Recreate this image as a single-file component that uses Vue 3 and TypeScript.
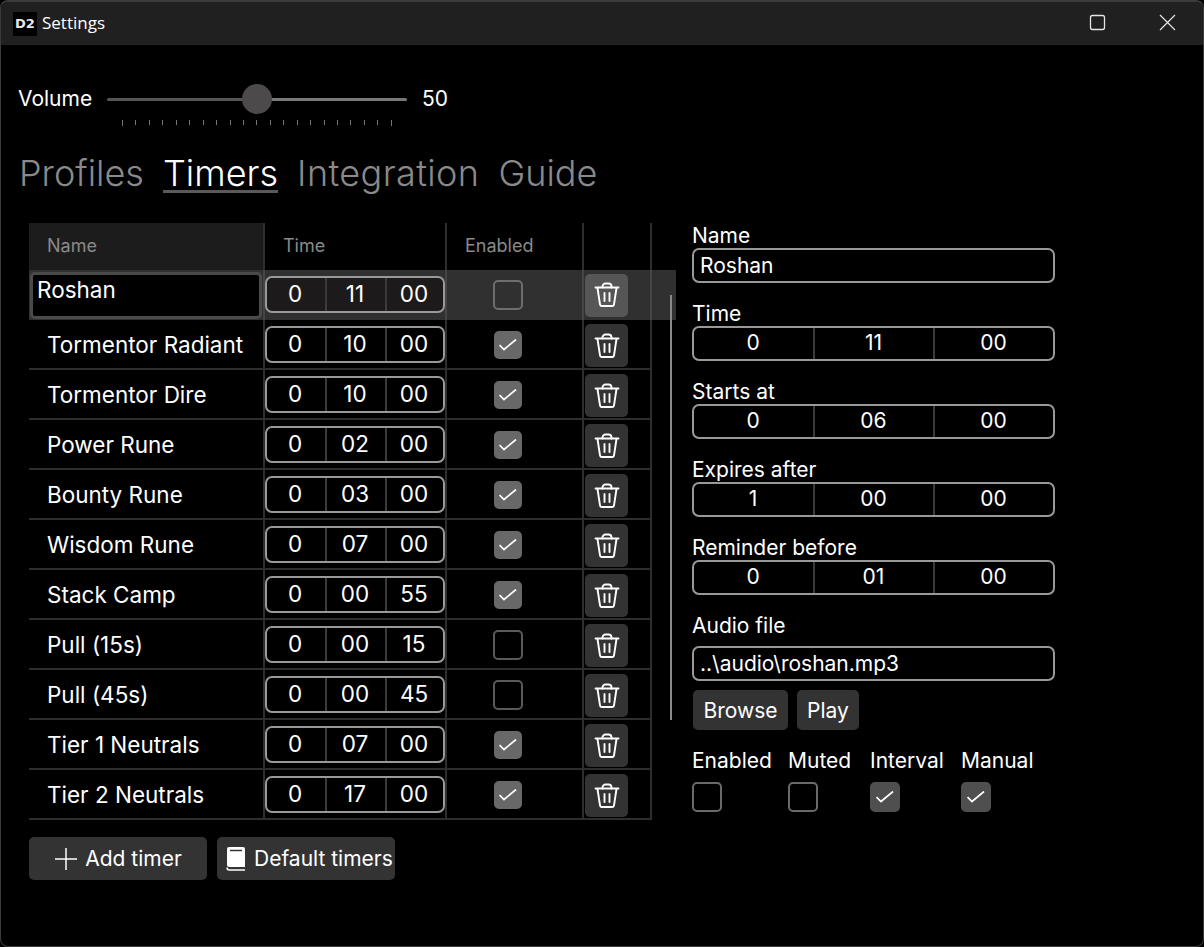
<script setup lang="ts">
interface TimerRow {
  name: string
  h: string
  m: string
  s: string
  on: boolean
}

const rows: TimerRow[] = [
  { name: 'Roshan', h: '0', m: '11', s: '00', on: false },
  { name: 'Tormentor Radiant', h: '0', m: '10', s: '00', on: true },
  { name: 'Tormentor Dire', h: '0', m: '10', s: '00', on: true },
  { name: 'Power Rune', h: '0', m: '02', s: '00', on: true },
  { name: 'Bounty Rune', h: '0', m: '03', s: '00', on: true },
  { name: 'Wisdom Rune', h: '0', m: '07', s: '00', on: true },
  { name: 'Stack Camp', h: '0', m: '00', s: '55', on: true },
  { name: 'Pull (15s)', h: '0', m: '00', s: '15', on: false },
  { name: 'Pull (45s)', h: '0', m: '00', s: '45', on: false },
  { name: 'Tier 1 Neutrals', h: '0', m: '07', s: '00', on: true },
  { name: 'Tier 2 Neutrals', h: '0', m: '17', s: '00', on: true },
]

const tabs = ['Profiles', 'Timers', 'Integration', 'Guide']
const ticks = Array.from({ length: 21 }, (_, i) => i)

const timeFields = [
  { label: 'Time', parts: ['0', '11', '00'] },
  { label: 'Starts at', parts: ['0', '06', '00'] },
  { label: 'Expires after', parts: ['1', '00', '00'] },
  { label: 'Reminder before', parts: ['0', '01', '00'] },
]

const flags = [
  { label: 'Enabled', on: false, width: 96 },
  { label: 'Muted', on: false, width: 82 },
  { label: 'Interval', on: true, width: 91 },
  { label: 'Manual', on: true, width: 72 },
]
</script>

<template>
  <div class="window">
    <header class="titlebar">
      <div class="logo">D2</div>
      <span class="title">Settings</span>
      <div class="controls">
        <svg width="70" height="45" viewBox="0 0 70 45">
          <rect x="27.500" y="15.500" width="14" height="14" rx="2" fill="none" stroke="#e4e4e4" stroke-width="1.300" />
        </svg>
        <svg width="70" height="45" viewBox="0 0 70 45">
          <path d="M27 15l15 15M42 15l-15 15" stroke="#e4e4e4" stroke-width="1.200" />
        </svg>
      </div>
    </header>

    <main class="content">
      <div class="volume">
        <span class="volume-label">Volume</span>
        <div class="slider">
          <div class="track">
            <div class="track-left" />
            <div class="track-right" />
            <div class="thumb" />
          </div>
          <div class="ticks">
            <i v-for="t in ticks" :key="t" :class="{ long: t === 0 || t === 20 }" />
          </div>
        </div>
        <span class="volume-value">50</span>
      </div>

      <nav class="tabs">
        <span v-for="t in tabs" :key="t" class="tab" :class="{ active: t === 'Timers' }">{{ t }}</span>
      </nav>

      <div class="columns">
        <section class="left">
          <div class="table">
            <div class="row head">
              <div class="cell name">Name</div>
              <div class="cell time-head">Time</div>
              <div class="cell enabled-head">Enabled</div>
              <div class="cell" />
            </div>

            <div v-for="(r, i) in rows" :key="r.name" class="row" :class="{ hover: i === 0 }">
              <div class="cell name">
                <div v-if="i === 0" class="name-edit">{{ r.name }}</div>
                <template v-else>{{ r.name }}</template>
              </div>
              <div class="cell time-cell">
                <div class="time-input">
                  <span>{{ r.h }}</span>
                  <span>{{ r.m }}</span>
                  <span>{{ r.s }}</span>
                </div>
              </div>
              <div class="cell check-cell">
                <span class="check" :class="{ on: r.on, light: true }">
                  <svg v-if="r.on" width="18" height="12" viewBox="0 0 18 12">
                    <path d="M.500 6L5 10.500 17 .500" fill="none" stroke="#fff" stroke-width="1.700" />
                  </svg>
                </span>
              </div>
              <div class="cell trash-cell">
                <button class="icon-btn">
                  <svg width="26" height="26" viewBox="0 0 26 26" fill="none" stroke="#fff" stroke-width="1.900" stroke-linecap="round" stroke-linejoin="round">
                    <path d="M1.500 5.500h23" />
                    <path d="M8.500 5.500V4.500a3 3 0 0 1 3-3h3a3 3 0 0 1 3 3v1" />
                    <path d="M3.500 6l2.500 16.300a2 2 0 0 0 2 1.700h10a2 2 0 0 0 2-1.700L22.500 6" />
                    <path d="M10.500 11v8M15.500 11v8" />
                  </svg>
                </button>
              </div>
            </div>
            <div class="hover-tail" />
            <div class="scrollbar" />
          </div>

          <div class="actions">
            <button class="btn wide">
              <svg width="24" height="24" viewBox="0 0 24 24"><path d="M12 1v22M1 12h22" stroke="#fff" stroke-width="1.500" /></svg>
              Add timer
            </button>
            <button class="btn wide default">
              <svg width="20" height="26" viewBox="0 0 20 26">
                <path d="M3 1h14a2 2 0 0 1 2 2v18H3a2 2 0 0 1-2-2V3a2 2 0 0 1 2-2z" fill="#fff" />
                <path d="M4 4.500h12" stroke="#333" stroke-width="1.500" />
                <path d="M1 21.500c0 1.500 1 2.500 2.500 2.500H19" fill="none" stroke="#fff" stroke-width="1.500" />
              </svg>
              Default timers
            </button>
          </div>
        </section>

        <aside class="side">
          <label class="side-label">Name</label>
          <div class="text-input">Roshan</div>

          <template v-for="f in timeFields" :key="f.label">
            <label class="side-label gap">{{ f.label }}</label>
            <div class="time-input wide-time">
              <span v-for="(p, i) in f.parts" :key="i">{{ p }}</span>
            </div>
          </template>

          <label class="side-label gap">Audio file</label>
          <div class="text-input audio">..\audio\roshan.mp3</div>

          <div class="file-btns">
            <button class="btn browse">Browse</button>
            <button class="btn play">Play</button>
          </div>

          <div class="flags">
            <div v-for="f in flags" :key="f.label" class="flag" :style="{ width: f.width + 'px' }">
              <span class="flag-label">{{ f.label }}</span>
              <span class="check" :class="{ on: f.on }">
                <svg v-if="f.on" width="18" height="12" viewBox="0 0 18 12">
                  <path d="M.500 6L5 10.500 17 .500" fill="none" stroke="#fff" stroke-width="1.700" />
                </svg>
              </span>
            </div>
          </div>
        </aside>
      </div>
    </main>
  </div>
</template>

<style>
html,
body {
  margin: 0;
  background: #000;
}
</style>

<style scoped>
.window {
  width: 1204px;
  height: 947px;
  box-sizing: border-box;
  background: #000;
  color: #fff;
  font-family: Inter, "Liberation Sans", sans-serif;
  font-size: 22.500px;
  border: 1px solid #3c3c3c;
  border-top: 2px solid #3c3c3c;
  border-radius: 8px;
  overflow: hidden;
}

.titlebar {
  height: 43px;
  background: #202020;
  display: flex;
  align-items: center;
  padding-left: 12px;
}

.logo {
  width: 24px;
  height: 24px;
  background: #000;
  color: #e8e8e8;
  font-family: "DejaVu Sans", sans-serif;
  font-size: 13px;
  font-weight: 700;
  line-height: 24px;
  text-align: center;
}

.title {
  margin-left: 5px;
  margin-bottom: 2px;
  font-family: "Open Sans", sans-serif;
  font-size: 17px;
}

.controls {
  margin-left: auto;
  display: flex;
  margin-top: -2px;
}

.content {
  padding: 0 0 0 17px;
}

.volume {
  display: flex;
  height: 106px;
  padding-top: 35px;
  box-sizing: border-box;
}

.volume-label {
  width: 89px;
  font-size: 21px;
  line-height: 38px;
}

.slider {
  width: 300px;
}

.track {
  position: relative;
  display: flex;
  height: 3px;
  margin-top: 18px;
}

.track-left {
  width: 150px;
  background: #555;
  border-radius: 2px 0 0 2px;
}

.track-right {
  width: 150px;
  background: #777;
  border-radius: 0 2px 2px 0;
}

.thumb {
  position: absolute;
  left: 135px;
  top: -14px;
  width: 30px;
  height: 30px;
  border-radius: 50%;
  background: #4c4a4a;
}

.ticks {
  display: flex;
  justify-content: space-between;
  margin: 19px 15px 0;
  height: 6px;
  align-items: flex-start;
}

.ticks i {
  display: block;
  width: 1px;
  height: 5px;
  background: #777;
}

.ticks i.long {
  height: 6px;
}

.volume-value {
  margin-left: 15px;
  font-size: 21px;
  line-height: 38px;
}

.tabs {
  display: flex;
  gap: 19px;
  height: 72px;
  margin-left: 1px;
  font-size: 36px;
  font-weight: 300;
  line-height: 44px;
}

.tab {
  color: #8a8a8a;
  height: 44px;
}

.tab:nth-child(3) {
  letter-spacing: 0.4px;
}

.tab.active {
  color: #fff;
  height: 39px;
  border-bottom: 3px solid #5a5a5a;
}

.columns {
  display: flex;
  margin-left: 11px;
}

.left {
  width: 664px;
}

.table {
  position: relative;
  width: 623px;
  height: 597px;
}

.row {
  display: grid;
  grid-template-columns: 236px 182px 137px 68px;
  height: 50px;
  box-sizing: border-box;
  border-bottom: 2px solid #2e2e2e;
}

.row.head {
  height: 47px;
  border-bottom: none;
}

.row.hover {
  background: #303030;
  border-bottom: none;
}

.cell {
  position: relative;
  border-right: 2px solid #2e2e2e;
  display: flex;
  align-items: center;
  min-width: 0;
}

.row.hover .cell {
  border-right-color: #454545;
}

.head .cell {
  font-size: 18px;
  color: #8a8a8a;
  padding-bottom: 3px;
  box-sizing: border-box;
}

.head .name {
  background: #1c1c1c;
}

.head .time-head,
.head .enabled-head {
  padding-left: 18px;
}

.name {
  padding-left: 18px;
  padding-top: 1px;
  box-sizing: border-box;
}

.row.hover .name {
  padding: 0;
}

.name-edit {
  width: 232px;
  height: 47px;
  margin-left: 1px;
  box-sizing: border-box;
  border: 3px solid #4a4a4a;
  border-radius: 5px;
  background: #000;
  padding-left: 4px;
  line-height: 30px;
}

.time-cell {
  padding-top: 1px;
}

.row.hover .time-cell {
  padding: 0 0 1px;
}

.time-input {
  display: grid;
  grid-template-columns: 58px 60px 1fr;
  width: 180px;
  height: 37px;
  box-sizing: border-box;
  border: 2px solid #999;
  border-radius: 7px;
  line-height: 31px;
  text-align: center;
}

.time-input span {
  padding-right: 2px;
}

.row.hover .time-input {
  background: #1c1a1a;
}

.time-input span + span {
  border-left: 2px solid #3a3a3a;
}

.check-cell {
  padding-left: 46px;
  padding-top: 2px;
}

.row.hover .check-cell {
  padding-top: 0;
}

.check {
  display: flex;
  align-items: center;
  justify-content: center;
  width: 30px;
  height: 30px;
  box-sizing: border-box;
  border: 2px solid #6a6a6a;
  border-radius: 5px;
}

.check.on {
  background: #4f4f4f;
  border-color: #4f4f4f;
}

.check.on.light {
  background: #686868;
  border-color: #686868;
  width: 28px;
  height: 28px;
  margin: 1px;
}

.row .check:not(.on) {
  border-color: #5a5a5a;
}

.row.hover .check {
  border-color: #6e6e6e;
}

.trash-cell {
  padding-left: 1px;
  padding-top: 3px;
}

.row.hover .trash-cell {
  padding-top: 0;
}

.icon-btn {
  width: 43px;
  height: 43px;
  display: flex;
  align-items: center;
  justify-content: center;
  background: #333;
  border: none;
  border-radius: 5px;
  padding: 0;
}

.row.hover .icon-btn {
  background: #565656;
}

.hover-tail {
  position: absolute;
  left: 623px;
  top: 47px;
  width: 24px;
  height: 50px;
  background: #303030;
}

.scrollbar {
  position: absolute;
  left: 641px;
  top: 72px;
  width: 2px;
  height: 425px;
  background: #8a8a8a;
}

.actions {
  display: flex;
  gap: 10px;
  margin-top: 17px;
}

.btn {
  display: inline-flex;
  align-items: center;
  justify-content: center;
  background: #333;
  border: none;
  border-radius: 5px;
  color: #fff;
  font-family: inherit;
  font-size: 21px;
  padding: 0;
}

.btn.wide {
  width: 178px;
  height: 43px;
  gap: 7px;
}

.btn.default {
  justify-content: flex-start;
  padding-left: 9px;
  gap: 8px;
  white-space: nowrap;
}

.side {
  width: 363px;
  margin-left: -1px;
  display: flex;
  flex-direction: column;
}

.side-label {
  font-size: 21px;
  line-height: 25px;
}

.side-label.gap {
  margin-top: 18px;
}

.text-input {
  width: 363px;
  height: 35px;
  box-sizing: border-box;
  border: 2px solid #999;
  border-radius: 7px;
  padding-left: 6px;
  line-height: 31px;
  font-size: 21px;
}

.text-input.audio {
  margin-top: 8px;
}

.time-input.wide-time {
  width: 363px;
  height: 35px;
  grid-template-columns: 119px 120px 1fr;
  font-size: 21px;
  line-height: 30px;
}

.time-input.wide-time span {
  padding-right: 1px;
}

.file-btns {
  display: flex;
  gap: 9px;
  margin: 9px 0 0 1px;
}

.btn.browse {
  width: 95px;
  height: 40px;
}

.btn.play {
  width: 62px;
  height: 40px;
}

.flags {
  display: flex;
  margin-top: 18px;
}

.flag {
  display: flex;
  flex-direction: column;
  gap: 9px;
}

.flag-label {
  font-size: 21px;
  line-height: 25px;
}
</style>
